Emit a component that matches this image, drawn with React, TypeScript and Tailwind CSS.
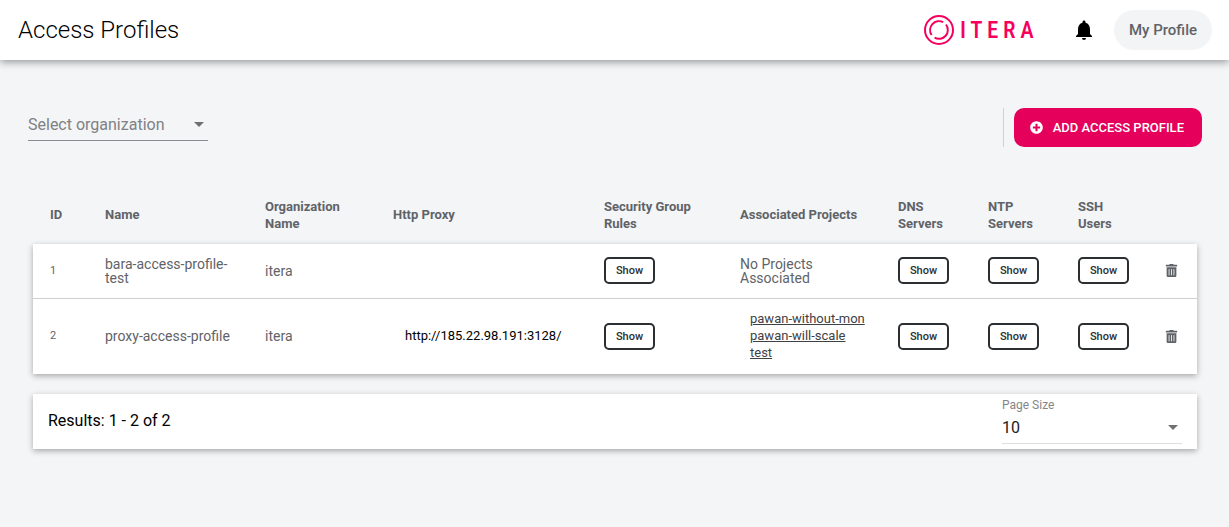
import type { ReactNode } from "react";
import { FaPlusCircle, FaTrashAlt } from "react-icons/fa";
import { MdNotifications } from "react-icons/md";

type Profile = {
  id: number;
  name: string;
  organization: string;
  proxy?: string;
  projects: string[];
};

const profiles: Profile[] = [
  { id: 1, name: "bara-access-profile-test", organization: "itera", projects: [] },
  {
    id: 2,
    name: "proxy-access-profile",
    organization: "itera",
    proxy: "http://185.22.98.191:3128/",
    projects: ["pawan-without-mon", "pawan-will-scale", "test"],
  },
];

function Logo() {
  return (
    <a href="#home" className="flex w-[111px] items-center gap-[6px] text-[#f5005e]" aria-label="ITERA">
      <svg width="30" height="30" viewBox="0 0 30 30" fill="none" stroke="currentColor" className="shrink-0">
        <circle cx="15" cy="15" r="14" strokeWidth="2" />
        <path d="M7.6 20A8.9 8.9 0 0 1 19.2 7.2" strokeWidth="2" />
        <path d="M22 9.5A8.9 8.9 0 0 1 10.6 22.7" strokeWidth="2" />
      </svg>
      <span className="pt-px font-['Roboto_Condensed','Liberation_Sans_Narrow','Roboto',sans-serif] text-[23px] leading-6 font-medium tracking-[0.2em]">
        ITERA
      </span>
    </a>
  );
}

function Caret() {
  return (
    <svg width="10" height="5" viewBox="0 0 10 5" className="pointer-events-none shrink-0 text-[#6f7072]" fill="currentColor">
      <path d="M0 0h10L5 5z" />
    </svg>
  );
}

function SelectBox({ id, line, children }: { id: string; line: string; children: ReactNode }) {
  return (
    <div className={`grid grid-cols-[1fr_auto] items-center border-b pr-1 ${line}`}>
      {children}
      <label htmlFor={id} className="col-start-2 row-start-1">
        <Caret />
      </label>
    </div>
  );
}

function ShowButton() {
  return (
    <button
      type="button"
      className="block h-[27px] w-[51px] rounded-[5px] border-2 border-[#2b2f31] bg-white text-center text-[11px] leading-none font-medium text-[#2b2f31]"
    >
      Show
    </button>
  );
}

const shadow = "shadow-[0_2px_6px_rgba(0,0,0,0.32)]";

export default function App() {
  return (
    <div className="min-h-screen bg-[#f3f5f7] font-['Roboto',sans-serif] text-[#5f6368]">
      <header className="relative flex h-[60px] items-center justify-between bg-white pr-[17px] pl-[18px] shadow-[0_2px_8px_rgba(0,0,0,0.4)]">
        <h1 className="text-2xl font-light text-black">Access Profiles</h1>
        <div className="flex items-center">
          <Logo />
          <button type="button" aria-label="Notifications" className="mr-[18px] ml-[37px] text-black">
            <MdNotifications size={24} />
          </button>
          <button type="button" className="h-10 rounded-full bg-[#f3f4f6] px-[15px] text-[15px] font-medium">
            My Profile
          </button>
        </div>
      </header>

      <main>
        <div className="flex items-start justify-between pt-12 pr-[27px] pl-7">
          <div className="w-[180px]">
            <SelectBox id="organization" line="border-[#8b8c8f]">
              <select
                id="organization"
                aria-label="Organization"
                defaultValue=""
                className="col-span-full row-start-1 h-8 w-full appearance-none bg-transparent pt-[2px] text-base text-[#808184] outline-none"
              >
                <option value="">Select organization</option>
                <option value="itera">itera</option>
              </select>
            </SelectBox>
          </div>
          <div className="flex border-l border-[#d0d1d4] pl-[10px]">
            <button
              type="button"
              className="flex h-[39px] items-center gap-[10px] rounded-[10px] bg-[#e5005b] pr-[18px] pl-4 text-[13px] font-medium text-white uppercase"
            >
              <FaPlusCircle size={13} />
              Add access profile
            </button>
          </div>
        </div>

        <div className="mr-8 ml-[33px] pt-[38px]">
          <table className="w-full table-fixed border-separate border-spacing-0 text-left">
            <colgroup>
              <col className="w-[62px]" />
              <col className="w-[160px]" />
              <col className="w-[128px]" />
              <col />
              <col className="w-[136px]" />
              <col className="w-[158px]" />
              <col className="w-[90px]" />
              <col className="w-[90px]" />
              <col className="w-[87px]" />
              <col className="w-[42px]" />
            </colgroup>
            <thead>
              <tr className="h-[59px] text-[13px] leading-[17px] [&>th]:pl-[10px] [&>th]:font-bold">
                <th className="pl-[17px]!">ID</th>
                <th>Name</th>
                <th className="pr-8">Organization Name</th>
                <th>Http Proxy</th>
                <th className="pr-6">Security Group Rules</th>
                <th>Associated Projects</th>
                <th className="pr-6">DNS Servers</th>
                <th className="pr-6">NTP Servers</th>
                <th className="pr-6">SSH Users</th>
                <th aria-label="Actions" />
              </tr>
            </thead>
            <tbody className={`bg-white ${shadow}`}>
              {profiles.map((p) => (
                <tr
                  key={p.id}
                  className="h-[55px] text-sm leading-[14px] [&:not(:last-child)>td]:border-b [&>td]:border-[#cfcfd1] [&>td]:pb-px [&>td]:pl-[10px]"
                >
                  <td className="pl-[17px]! text-[11px]">{p.id}</td>
                  <td className="pr-5">{p.name}</td>
                  <td>{p.organization}</td>
                  <td className="pl-[22px]! text-[13px] text-black">{p.proxy}</td>
                  <td>
                    <ShowButton />
                  </td>
                  <td>
                    {p.projects.length === 0 ? (
                      <p className="pr-10">No Projects Associated</p>
                    ) : (
                      <ul className="pt-[11px] pb-3 pl-[10px] text-[13px] leading-[17px] text-[#3f4144]">
                        {p.projects.map((name) => (
                          <li key={name}>
                            <a href={`#${name}`} className="underline">
                              {name}
                            </a>
                          </li>
                        ))}
                      </ul>
                    )}
                  </td>
                  <td>
                    <ShowButton />
                  </td>
                  <td>
                    <ShowButton />
                  </td>
                  <td>
                    <ShowButton />
                  </td>
                  <td>
                    <button type="button" aria-label={`Delete ${p.name}`} className="block">
                      <FaTrashAlt size={13} />
                    </button>
                  </td>
                </tr>
              ))}
            </tbody>
          </table>

          <footer className={`mt-5 flex h-[55px] items-start justify-between bg-white px-[15px] ${shadow}`}>
            <p className="pt-[15px] text-base text-black">Results: 1 - 2 of 2</p>
            <div className="w-[180px] pt-1">
              <label htmlFor="page-size" className="block text-xs leading-[14px] text-[#858688]">
                Page Size
              </label>
              <SelectBox id="page-size" line="border-[#dedede]">
                <select
                  id="page-size"
                  defaultValue="10"
                  className="col-span-full row-start-1 h-[31px] w-full appearance-none bg-transparent text-base text-[#212121] outline-none"
                >
                  <option>10</option>
                  <option>25</option>
                  <option>50</option>
                </select>
              </SelectBox>
            </div>
          </footer>
        </div>
      </main>
    </div>
  );
}
